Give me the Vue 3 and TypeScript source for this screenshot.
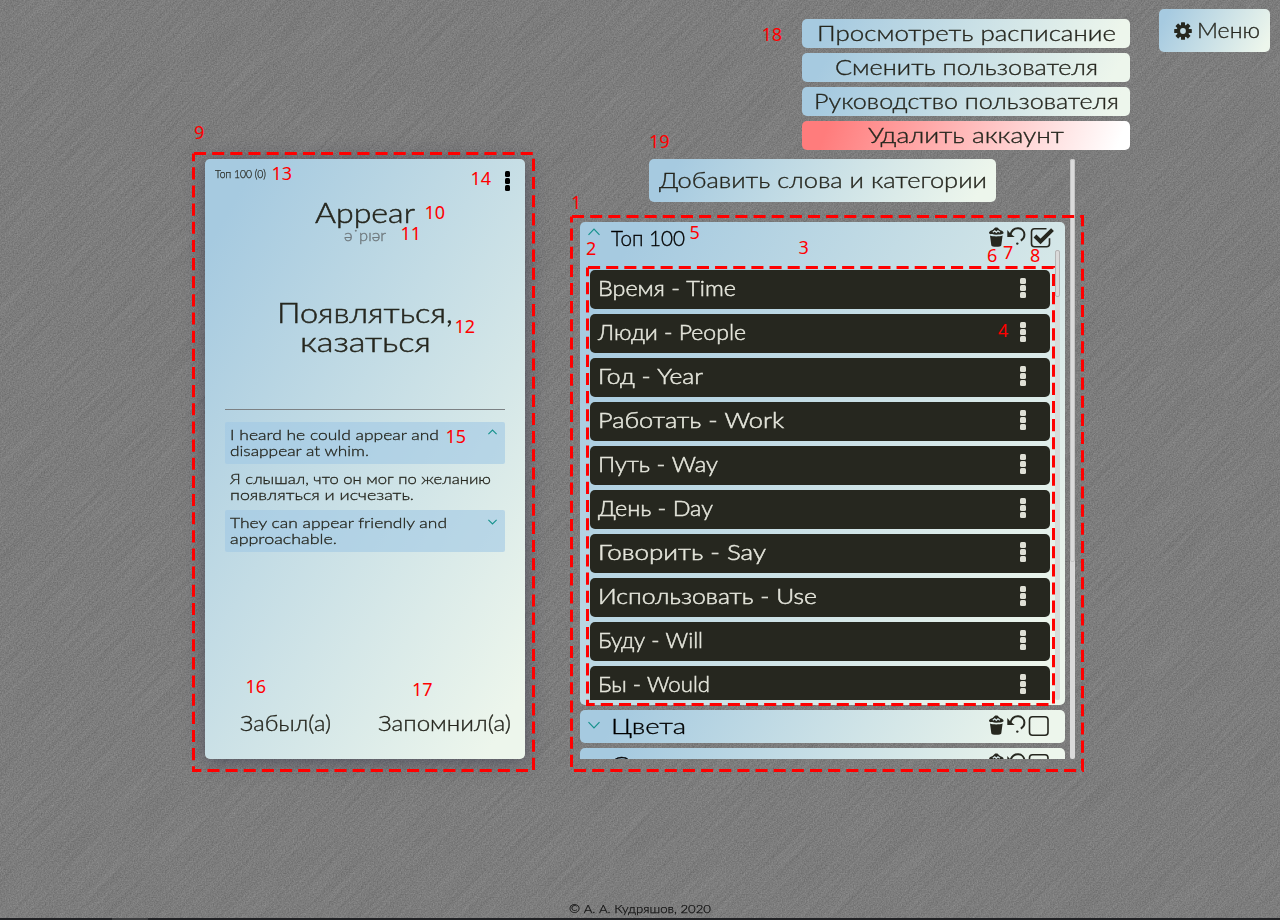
<script setup lang="ts">
interface Label { text: string; width: number }
interface Mark { n: number; x: number; y: number }
interface Frame { x: number; y: number; w: number; h: number }

// Widens a label's letterforms so that it takes exactly the given width.
const vFit = {
  mounted(el: HTMLElement, binding: { value: number }) {
    const natural = el.getBoundingClientRect().width
    if (!natural) return
    el.style.transform = `scaleX(${(binding.value / natural).toFixed(4)})`
    el.style.marginRight = `${(binding.value - natural).toFixed(2)}px`
  },
}

const menu: (Label & { danger?: boolean })[] = [
  { text: 'Просмотреть расписание', width: 299 },
  { text: 'Сменить пользователя', width: 263 },
  { text: 'Руководство пользователя', width: 305 },
  { text: 'Удалить аккаунт', width: 196, danger: true },
]

const words: Label[] = [
  { text: 'Время - Time', width: 138 },
  { text: 'Люди - People', width: 148 },
  { text: 'Год - Year', width: 105 },
  { text: 'Работать - Work', width: 186 },
  { text: 'Путь - Way', width: 120 },
  { text: 'День - Day', width: 115 },
  { text: 'Говорить - Say', width: 168 },
  { text: 'Использовать - Use', width: 219 },
  { text: 'Буду - Will', width: 105 },
  { text: 'Бы - Would', width: 112 },
]

const categories = [
  { text: 'Топ 100', width: 74, open: true },
  { text: 'Цвета', width: 75, open: false },
  { text: 'Семья', width: 75, open: false },
]

const examples: { lines: Label[]; kind: 'open' | 'plain' | 'closed' }[] = [
  { kind: 'open', lines: [{ text: 'I heard he could appear and', width: 209 }, { text: 'disappear at whim.', width: 139 }] },
  { kind: 'plain', lines: [{ text: 'Я слышал, что он мог по желанию', width: 261 }, { text: 'появляться и исчезать.', width: 184 }] },
  { kind: 'closed', lines: [{ text: 'They can appear friendly and', width: 217 }, { text: 'approachable.', width: 107 }] },
]

const marks: Mark[] = [
  { n: 18, x: 761.5, y: 41 }, { n: 9, x: 194, y: 139 }, { n: 13, x: 271.5, y: 180 },
  { n: 14, x: 470.5, y: 185 }, { n: 10, x: 424.5, y: 219 }, { n: 11, x: 400.5, y: 240 },
  { n: 12, x: 454.5, y: 333 }, { n: 15, x: 445.5, y: 443 }, { n: 16, x: 245.5, y: 693 },
  { n: 17, x: 412, y: 696 }, { n: 19, x: 649, y: 148 }, { n: 1, x: 571, y: 209 },
  { n: 2, x: 586, y: 255 }, { n: 5, x: 689.5, y: 239 }, { n: 3, x: 798.5, y: 254 },
  { n: 4, x: 998, y: 337 }, { n: 6, x: 987, y: 262 }, { n: 7, x: 1003, y: 259 },
  { n: 8, x: 1030, y: 262 },
]

const frames: Frame[] = [
  { x: 193.5, y: 153.5, w: 340, h: 617 },
  { x: 571.5, y: 216.5, w: 511, h: 554 },
  { x: 587.5, y: 267.5, w: 466, h: 437 },
]
</script>

<template>
  <div class="page">
    <svg class="grain" width="1280" height="920">
      <filter id="grain" x="0" y="0" width="100%" height="100%" color-interpolation-filters="sRGB">
        <feTurbulence type="fractalNoise" baseFrequency="0.75" numOctaves="2" seed="4" />
        <feColorMatrix values="0.22 0 0 0 0.38  0.22 0 0 0 0.38  0.22 0 0 0 0.38  0 0 0 0 1" />
      </filter>
      <rect width="1280" height="920" filter="url(#grain)" />
    </svg>
    <svg class="streaks" width="1600" height="1600">
      <filter id="streaks" x="0" y="0" width="100%" height="100%" color-interpolation-filters="sRGB">
        <feTurbulence type="fractalNoise" baseFrequency="0.012 0.42" numOctaves="2" seed="9" />
        <feColorMatrix values="0.3 0 0 0 0.34  0.3 0 0 0 0.34  0.3 0 0 0 0.34  0 0 0 0 1" />
      </filter>
      <rect width="1600" height="1600" filter="url(#streaks)" />
    </svg>

    <header class="top">
      <button class="menu-btn tint">
        <svg width="18" height="18" viewBox="0 0 18 18">
          <g fill="#26271f">
            <rect v-for="a in [0, 45, 90, 135]" :key="a" x="7" y="0.2" width="4" height="17.6" rx="0.6" :transform="`rotate(${a} 9 9)`" />
            <circle cx="9" cy="9" r="6.3" />
          </g>
          <circle cx="9" cy="9" r="2.9" fill="#c0dae4" />
        </svg>
        <span v-fit="63">Меню</span>
      </button>
      <nav class="menu">
        <button v-for="m in menu" :key="m.text" class="menu-item" :class="m.danger ? 'danger' : 'tint'">
          <span v-fit="m.width">{{ m.text }}</span>
        </button>
      </nav>
    </header>

    <main class="main">
      <section class="card tint">
        <div class="card-top">
          <span v-fit="51" class="meta">Топ 100 (0)</span>
          <span class="dots dark"><i /><i /><i /></span>
        </div>
        <h1><span v-fit="100">Appear</span></h1>
        <div class="ipa"><span v-fit="42">ə˙pɪər</span></div>
        <div class="translation">
          <div><span v-fit="176">Появляться,</span></div>
          <div><span v-fit="131">казаться</span></div>
        </div>
        <div class="examples">
          <div v-for="(e, i) in examples" :key="i" class="example" :class="e.kind">
            <div class="lines">
              <div v-for="l in e.lines" :key="l.text"><span v-fit="l.width">{{ l.text }}</span></div>
            </div>
            <svg v-if="e.kind !== 'plain'" width="9" height="6" viewBox="0 0 9 6">
              <path :d="e.kind === 'open' ? 'M.4 5.2 4.5 1l4.1 4.2' : 'M.4.8 4.5 5 8.6.8'" fill="none" stroke="#16928c" stroke-width="1.1" />
            </svg>
          </div>
        </div>
        <div class="answers">
          <span v-fit="91">Забыл(а)</span>
          <span v-fit="133">Запомнил(а)</span>
        </div>
      </section>

      <section class="library">
        <div class="list">
          <button class="add tint"><span v-fit="328">Добавить слова и категории</span></button>
          <article v-for="c in categories" :key="c.text" class="category tint" :class="{ open: c.open }">
            <div class="cat-head">
              <svg class="chev" width="12" height="8" viewBox="0 0 12 8">
                <path :d="c.open ? 'M.5 6.8 6 1.2l5.5 5.6' : 'M.5 1.2 6 6.8l5.5-5.6'" fill="none" stroke="#16928c" stroke-width="1.2" />
              </svg>
              <span v-fit="c.width" class="cat-name">{{ c.text }}</span>
              <svg class="tools" width="68" height="22" viewBox="0 0 68 22">
                <g fill="#26271f">
                  <path d="M1.2 7.6C.4 5.600 3.100 4.600 4.600 4L7.200 1.600h2.200L12 4c1.500.6 4.400 1.600 3.400 3.600C13.600 9.200 3 9.200 1.200 7.600Z" />
                  <path d="M2 9.600c3 1.200 9.400 1.200 12.600 0L13.300 19.200c-.2 2-9.800 2-10 0Z" />
                  <circle cx="29.300" cy="17.600" r="1.200" />
                  <path d="M19.300 4v7h7.400l-2.500-2-2.500-2.300Z" />
                </g>
                <path d="m4.800 6.300 2-1.500 1.500 1.600 1.600-1.600 2 1.500" fill="none" stroke="#d6e6e8" stroke-width="1.300" />
                <path d="M22.300 8.800C25-.5 36.300 1 36.400 8.600c0 2.600-1.300 4.600-3.600 6" fill="none" stroke="#26271f" stroke-width="2" />
                <template v-if="c.open">
                  <path d="M58.500 2.700H46.500a3 3 0 0 0-3 3v12a3 3 0 0 0 3 3h12a3 3 0 0 0 3-3v-5.500" fill="none" stroke="#26271f" stroke-width="1.600" />
                  <path d="m47 10 5.500 5.500L64.500 3.600" fill="none" stroke="#26271f" stroke-width="4" />
                </template>
                <rect v-else x="41.500" y="2.700" width="18.500" height="18.500" rx="3" fill="none" stroke="#26271f" stroke-width="1.600" />
              </svg>
            </div>
            <div v-if="c.open" class="cat-body">
              <div class="words">
                <div v-for="w in words" :key="w.text" class="word">
                  <span v-fit="w.width">{{ w.text }}</span>
                  <span class="dots light"><i /><i /><i /></span>
                </div>
              </div>
              <div class="scroll inner"><div class="thumb" /></div>
            </div>
          </article>
        </div>
        <div class="scroll outer"><div class="thumb" /></div>
      </section>
    </main>

    <footer><span v-fit="142">© А. А. Кудряшов, 2020</span></footer>
    <div class="taskbar"><i /></div>

    <svg class="notes" width="1280" height="920">
      <rect v-for="f in frames" :key="f.x" :x="f.x" :y="f.y" :width="f.w" :height="f.h" fill="none" stroke="#f00" stroke-width="3" stroke-dasharray="12.1 6.05" stroke-dashoffset="-0.5" />
      <text v-for="m in marks" :key="m.n" :x="m.x" :y="m.y">{{ m.n }}</text>
    </svg>
  </div>
</template>

<style>
html, body { margin: 0; background: #7e7e7e; overflow: hidden; }
</style>

<style scoped>
* { box-sizing: border-box; }
.page {
  position: relative; width: 1280px; height: 920px; overflow: hidden;
  background: #7e7e7e; color: #26271f; font-family: Lato, "Noto Sans", sans-serif;
  font-weight: 300; font-size: 22px; -webkit-text-stroke: .35px currentColor;
  display: flex; flex-direction: column;
}
.page span { display: inline-block; white-space: nowrap; transform-origin: 0 50%; }
.page span.dots { display: flex; }
.grain { position: absolute; left: 0; top: 0; }
.streaks { position: absolute; left: -160px; top: -340px; transform: rotate(-45deg); opacity: .22; }
.notes { position: absolute; left: 0; top: 0; -webkit-text-stroke: 0; }
.notes text { font: 18px "Noto Sans", sans-serif; fill: #f00; }
button { border: 0; padding: 0 0 2px; font: inherit; color: inherit; -webkit-text-stroke: inherit; display: flex; align-items: center; justify-content: center; }
.tint { background: linear-gradient(120deg, #a6cae0 8%, #edf6ec 94%); }
.danger { background: linear-gradient(110deg, #ff7c7c 8%, #fff 96%); }

.top { position: relative; height: 159px; padding: 9px 10px; display: flex; justify-content: flex-end; flex: none; }
.menu-btn { width: 111px; height: 43px; border-radius: 5px; gap: 5px; padding-left: 4px; }
.menu-btn svg { position: relative; top: 1px; }
.menu { position: absolute; left: 802px; top: 19px; width: 328px; display: flex; flex-direction: column; gap: 5px; }
.menu-item { height: 29px; border-radius: 5px; }

.main { position: relative; display: flex; gap: 55px; padding-left: 205px; height: 600px; flex: none; }
.card { width: 320px; height: 600px; border-radius: 5px; box-shadow: 0 2px 20px rgba(48, 48, 72, .55); display: flex; flex-direction: column; }
.card-top { display: flex; justify-content: space-between; padding: 8px 15px 0 10px; height: 36px; }
.meta { font-size: 11px; line-height: 14px; height: 14px; -webkit-text-stroke-width: .25px; }
.dots { flex-direction: column; }
.dots.dark { gap: 1px; padding-top: 4px; }
.dots.dark i { width: 5px; height: 6px; border-radius: 1.5px; background: #000; }
.dots.light { gap: 1px; position: relative; top: 0; }
.dots.light i { width: 6px; height: 6px; border-radius: 1.5px; background: #dedfd5; }
h1 { margin: 0; font-size: 28px; font-weight: 300; line-height: 34px; height: 36px; text-align: center; -webkit-text-stroke-width: .5px; }
.ipa { height: 18px; margin-top: -4px; line-height: 16px; font-size: 15px; color: #6f797e; text-align: center; }
.translation { margin-top: 53px; font-size: 28px; line-height: 29px; text-align: center; height: 111px; -webkit-text-stroke-width: .5px; }
.examples { margin: 0 20px; border-top: 1px solid #7c8184; padding-top: 12px; height: 270px; }
.example { display: flex; justify-content: space-between; padding: 5px 8px 4px 5px; height: 42px; font-size: 14.5px; line-height: 16px; -webkit-text-stroke-width: .3px; }
.lines div { height: 16px; }
.example svg { margin-top: 2px; }
.closed.example svg { margin-top: 4px; }
.example.plain { height: 46px; padding-top: 7px; }
.example.open, .example.closed { background: rgba(160, 200, 228, .6); border-radius: 2px; }
.answers { display: flex; justify-content: space-between; padding: 0 14px 0 35px; line-height: 28px; margin-top: 30px; }

.library { width: 495px; height: 600px; display: flex; gap: 5px; }
.list { width: 485px; height: 600px; overflow: hidden; display: flex; flex-direction: column; gap: 5px; }
.add { width: 347px; height: 43px; flex: none; border-radius: 5px; margin: 0 0 15px 69px; }
.category { height: 33px; flex: none; border-radius: 5px; }
.category.open { height: 483px; }
.cat-head { display: flex; align-items: flex-start; padding: 0 9px 0 8px; height: 28px; }
.chev { margin: 11px 11px 0 0; flex: none; }
.open .chev { margin-top: 6px; }
.cat-name { line-height: 31px; color: #000; }
.tools { margin: 4px 0 0 auto; flex: none; }
.cat-body { display: flex; justify-content: space-between; padding: 0 5px 0 10px; height: 450px; }
.words { width: 460px; overflow: hidden; display: flex; flex-direction: column; gap: 5px; padding-top: 20px; }
.word { height: 39px; flex: none; border-radius: 5px; background: #26271f; color: #e4e5db; -webkit-text-stroke-width: .5px; display: flex; align-items: center; justify-content: space-between; padding: 0 24px 4px 8px; }
.scroll { width: 5px; background: #dadada; border-radius: 2px; flex: none; }
.thumb { border: 1px solid #b4b4b4; border-radius: 2px; background: #dadada; }
.inner .thumb { height: 47px; }
.inner { height: 450px; background: #d8dcda; }
.outer .thumb { height: 403px; border-color: #c4c4c4; }

footer { position: relative; margin-top: 141px; text-align: center; font-size: 12px; line-height: 18px; color: #111; -webkit-text-stroke-width: .25px; }
.taskbar { position: absolute; left: 0; bottom: 0; width: 100%; height: 2px; background: #202124; padding-left: 112px; }
.taskbar i { display: block; width: 36px; height: 2px; background: #3c3d3f; }
</style>
